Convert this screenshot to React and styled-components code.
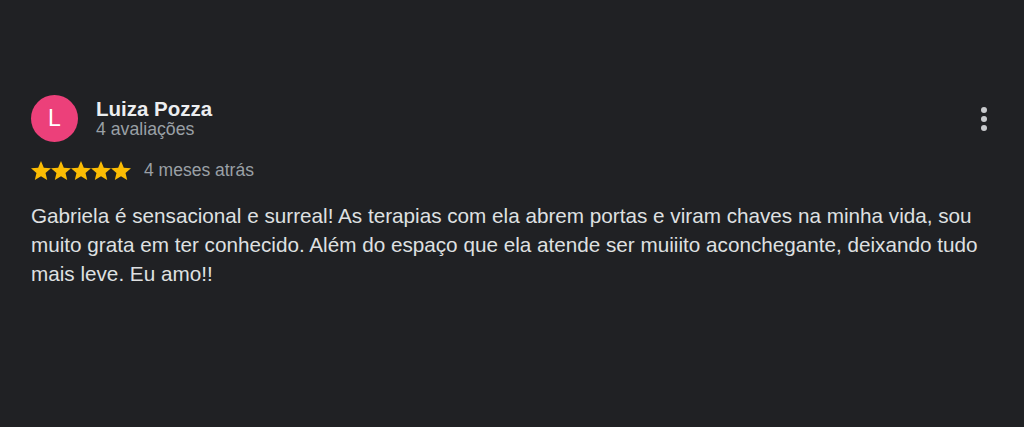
import React from "react";
import styled, { createGlobalStyle } from "styled-components";

const Global = createGlobalStyle`
  html, body { margin: 0; padding: 0; background: #202124; }
  body { font-family: "Liberation Sans", Arial, sans-serif; }
`;

const Page = styled.div`
  width: 1024px;
  height: 427px;
  background: #202124;
  box-sizing: border-box;
  padding: 95px 31px 0 31px;
`;

const Header = styled.div`
  display: flex;
  align-items: flex-start;
  gap: 18px;
`;

const Avatar = styled.div`
  width: 47px;
  height: 47px;
  border-radius: 50%;
  background: ${(p) => p.$color};
  color: #fff;
  display: flex;
  align-items: center;
  justify-content: center;
  font-size: 23px;
  flex-shrink: 0;
`;

const Who = styled.div`
  display: flex;
  flex-direction: column;
  flex: 1;
  padding-top: 3px;
`;

const Name = styled.div`
  color: #eceef0;
  font-size: 20.5px;
  font-weight: 700;
  line-height: 22px;
`;

const Sub = styled.div`
  color: #9aa0a6;
  font-size: 17.7px;
  line-height: 18px;
`;

const MoreButton = styled.button`
  background: none;
  border: 0;
  padding: 0;
  width: 18px;
  height: 30px;
  margin-top: 9px;
  display: flex;
  flex-direction: column;
  align-items: center;
  justify-content: center;
  gap: 3px;
  cursor: pointer;
`;

const Dot = styled.span`
  width: 6px;
  height: 6px;
  border-radius: 50%;
  background: #c8cacd;
`;

const RatingRow = styled.div`
  display: flex;
  align-items: center;
  gap: 13px;
  height: 24px;
  margin-top: 16px;
`;

const Stars = styled.div`
  display: flex;
`;

const When = styled.span`
  color: #9aa0a6;
  font-size: 17.5px;
  line-height: 24px;
`;

const Body = styled.p`
  margin: 19px 0 0;
  color: #dfe0e1;
  font-size: 20.7px;
  line-height: 29px;
`;

const Star = () => (
  <svg width="20" height="19" viewBox="2 2 20 19">
    <path
      fill="#fbbc04"
      d="M12 17.27L18.18 21l-1.64-7.03L22 9.24l-7.19-.61L12 2 9.19 8.63 2 9.24l5.46 4.73L5.82 21z"
    />
  </svg>
);

export default function App() {
  return (
    <>
      <Global />
      <Page>
        <Header>
          <Avatar $color="#ec407a">L</Avatar>
          <Who>
            <Name>Luiza Pozza</Name>
            <Sub>4 avaliações</Sub>
          </Who>
          <MoreButton aria-label="Mais opções">
            <Dot />
            <Dot />
            <Dot />
          </MoreButton>
        </Header>
        <RatingRow>
          <Stars>
            {[0, 1, 2, 3, 4].map((i) => (
              <Star key={i} />
            ))}
          </Stars>
          <When>4 meses atrás</When>
        </RatingRow>
        <Body>
          Gabriela é sensacional e surreal! As terapias com ela abrem portas e
          viram chaves na minha vida, sou muito grata em ter conhecido. Além do
          espaço que ela atende ser muiiito aconchegante, deixando tudo mais
          leve. Eu amo!!
        </Body>
      </Page>
    </>
  );
}
